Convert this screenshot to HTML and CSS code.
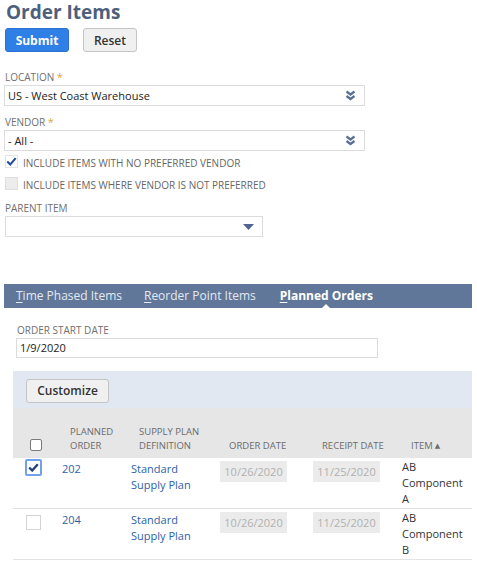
FILE: index.html
```html
<!DOCTYPE html>
<html>
<head>
<meta charset="utf-8">
<link rel="stylesheet" href="styles.css">
</head>
<body>
<div class="page">
  <h1 class="title">Order Items</h1>
  <div class="actions">
    <button class="btn btn-primary">Submit</button>
    <button class="btn btn-secondary">Reset</button>
  </div>

  <div class="field field-location">
    <div class="label">LOCATION <span class="req">*</span></div>
    <div class="select wide">
      <span>US - West Coast Warehouse</span>
      <svg class="dbl" width="11" height="11" viewBox="0 0 11 11"><path d="M1.5 1.5 L5.5 4.5 L9.5 1.5" fill="none" stroke="#5a6f96" stroke-width="2.2"/><path d="M1.5 6 L5.5 9 L9.5 6" fill="none" stroke="#5a6f96" stroke-width="2.2"/></svg>
    </div>
  </div>

  <div class="field field-vendor">
    <div class="label">VENDOR <span class="req">*</span></div>
    <div class="select wide">
      <span>- All -</span>
      <svg class="dbl" width="11" height="11" viewBox="0 0 11 11"><path d="M1.5 1.5 L5.5 4.5 L9.5 1.5" fill="none" stroke="#5a6f96" stroke-width="2.2"/><path d="M1.5 6 L5.5 9 L9.5 6" fill="none" stroke="#5a6f96" stroke-width="2.2"/></svg>
    </div>
  </div>

  <div class="checks">
    <div class="check-row">
      <span class="cb cb-plain">
        <svg width="13" height="11" viewBox="0 0 13 11"><path d="M1.5 5.5 L5 9 L11.5 1.5" fill="none" stroke="#1f4e9c" stroke-width="2.4"/></svg>
      </span>
      <span class="check-text">INCLUDE ITEMS WITH NO PREFERRED VENDOR</span>
    </div>
    <div class="check-row">
      <span class="cb cb-disabled"></span>
      <span class="check-text">INCLUDE ITEMS WHERE VENDOR IS NOT PREFERRED</span>
    </div>
  </div>

  <div class="field field-parent">
    <div class="label">PARENT ITEM</div>
    <div class="select narrow">
      <span></span>
      <svg class="tri" width="11" height="6" viewBox="0 0 11 6"><path d="M0 0 L11 0 L5.5 6 Z" fill="#4e6691"/></svg>
    </div>
  </div>

  <div class="tabs">
    <span class="tab"><u>T</u>ime Phased Items</span>
    <span class="tab"><u>R</u>eorder Point Items</span>
    <span class="tab tab-active"><u>P</u>lanned Orders</span>
  </div>

  <div class="sub">
    <div class="label">ORDER START DATE</div>
    <div class="input">1/9/2020</div>
  </div>

  <div class="grid-wrap">
    <div class="band">
      <button class="btn btn-secondary btn-customize">Customize</button>
    </div>
    <div class="table">
      <div class="row head">
        <div class="cell c1"><span class="cb cb-head"></span></div>
        <div class="cell c2">PLANNED<br>ORDER</div>
        <div class="cell c3">SUPPLY PLAN<br>DEFINITION</div>
        <div class="cell c4">ORDER DATE</div>
        <div class="cell c5">RECEIPT DATE</div>
        <div class="cell c6">ITEM <span class="sort">▲</span></div>
      </div>
      <div class="row body">
        <div class="cell c1"><span class="cb cb-focus"><svg width="11" height="9" viewBox="0 0 11 9"><path d="M1.2 4.5 L4.2 7.5 L9.8 1.2" fill="none" stroke="#1f3f7a" stroke-width="2.3"/></svg></span></div>
        <div class="cell c2"><a class="link">202</a></div>
        <div class="cell c3"><a class="link">Standard<br>Supply Plan</a></div>
        <div class="cell c4"><span class="date">10/26/2020</span></div>
        <div class="cell c5"><span class="date">11/25/2020</span></div>
        <div class="cell c6">AB<br>Component<br>A</div>
      </div>
      <div class="row body">
        <div class="cell c1"><span class="cb cb-empty"></span></div>
        <div class="cell c2"><a class="link">204</a></div>
        <div class="cell c3"><a class="link">Standard<br>Supply Plan</a></div>
        <div class="cell c4"><span class="date">10/26/2020</span></div>
        <div class="cell c5"><span class="date">11/25/2020</span></div>
        <div class="cell c6">AB<br>Component<br>B</div>
      </div>
    </div>
  </div>
</div>
</body>
</html>
```
FILE: styles.css
```css
* { box-sizing: border-box; }
body {
  margin: 0;
  background: #ffffff;
  font-family: "Open Sans", "DejaVu Sans", sans-serif;
  color: #333333;
}
.page {
  width: 477px;
  height: 566px;
  overflow: hidden;
  padding-left: 5px;
}
.title {
  margin: 0;
  padding: 2px 0 0 1px;
  font-size: 19px;
  line-height: 20px;
  font-weight: 700;
  color: #4d5f7c;
}
.actions {
  display: flex;
  gap: 14px;
  margin-top: 6px;
}
.btn {
  font-family: "Open Sans", "DejaVu Sans", sans-serif;
  font-size: 12px;
  font-weight: 700;
  height: 24px;
  border-radius: 3px;
  padding: 0;
  cursor: default;
}
.btn-primary {
  width: 64px;
  background: #2f80e6;
  border: 1px solid #2a72cf;
  color: #ffffff;
}
.btn-secondary {
  width: 54px;
  background: #f0f0f0;
  border: 1px solid #c4c4c4;
  color: #333333;
  font-weight: 600;
}
.label {
  font-size: 10px;
  line-height: 12px;
  color: #707070;
}
.req { color: #e8a23a; font-size: 11px; }
.field { display: flex; flex-direction: column; gap: 2px; }
.field-location { margin-top: 19px; }
.field-vendor { margin-top: 10px; }
.field-parent { margin-top: 3px; }
.select {
  height: 21px;
  border: 1px solid #dcdcdc;
  display: flex;
  align-items: center;
  justify-content: space-between;
  padding: 0 8px 0 3px;
  font-size: 11px;
  color: #222222;
}
.select.wide { width: 361px; margin-left: -1px; }
.select.narrow { width: 258px; }
.checks { margin-top: 4px; display: flex; flex-direction: column; }
.check-row {
  height: 22px;
  display: flex;
  align-items: flex-start;
  gap: 5px;
}
.cb {
  width: 13px;
  height: 13px;
  display: inline-flex;
  align-items: center;
  justify-content: center;
  flex: none;
}
.cb-plain { border: 1px solid #e4e4e4; background: #ffffff; }
.cb-disabled { border: 1px solid #dedede; background: #ececec; }
.check-text {
  font-size: 10px;
  line-height: 14px;
  color: #666666;
  padding-top: 1px;
}
.tabs {
  margin-top: 47px;
  width: 468px;
  margin-left: -1px;
  height: 24px;
  background: #607799;
  display: flex;
  align-items: center;
  gap: 22px;
  padding-left: 12px;
  font-size: 12px;
  color: #e4e9f1;
}
.tab { position: relative; line-height: 24px; }
.tab u { text-decoration: underline; text-underline-offset: 2px; }
.tab-active { font-weight: 700; color: #ffffff; margin-left: 2px; }
.tab-active::after {
  content: "";
  position: absolute;
  left: 50%;
  bottom: 0;
  margin-left: -4px;
  border-left: 4px solid transparent;
  border-right: 4px solid transparent;
  border-bottom: 4px solid #ffffff;
}
.sub { padding-left: 12px; margin-top: 16px; display: flex; flex-direction: column; gap: 2px; }
.input {
  width: 362px;
  height: 20px;
  border: 1px solid #dcdcdc;
  font-size: 11px;
  line-height: 18px;
  padding-left: 3px;
  color: #222222;
  margin-left: -1px;
}
.grid-wrap { margin-top: 13px; margin-left: 8px; width: 459px; overflow: hidden; }
.band {
  height: 37px;
  background: #e1e8f1;
  padding: 7px 0 0 13px;
}
.btn-customize { width: 83px; font-size: 12px; font-weight: 600; }
.table { display: flex; flex-direction: column; }
.row {
  display: grid;
  grid-template-columns: 42px 69px 89px 93px 89px 77px;
}
.head {
  height: 50px;
  background: #e6e6e6;
  font-size: 9.5px;
  line-height: 14px;
  color: #6b6b6b;
}
.head .cell { display: flex; align-items: flex-end; padding-bottom: 5px; }
.head .c1 { padding-left: 17px; padding-bottom: 7px; }
.head .c2, .head .c3 { padding-left: 15px; }
.head .c4, .head .c5, .head .c6 { padding-left: 16px; }
.sort { font-size: 7px; margin-left: 2px; }
.cb-head { width: 12px; height: 12px; border: 1px solid #7a7a7a; border-radius: 2px; background: #ffffff; }
.body {
  height: 51px;
  border-bottom: 1px solid #e2e2e2;
  font-size: 11px;
  line-height: 16px;
  color: #333333;
}
.body .cell { padding-left: 7px; padding-top: 3px; }
.body .c1 { padding-left: 12px; padding-top: 1px; }
.body .c2, .body .c3 { padding-top: 3px; }
.body .c6 { padding-top: 1px; }
.cb-focus { width: 17px; height: 17px; border: 2px solid #6ea3e8; background: #ffffff; border-radius: 2px; }
.cb-empty { width: 15px; height: 15px; border: 1px solid #d4d4d4; background: #ffffff; margin-top: 5px; margin-left: 1px; }
.link { color: #2d5fa8; text-decoration: none; }
.date {
  display: inline-block;
  width: 67px;
  height: 21px;
  background: #ebebeb;
  color: #b0b0b0;
  font-size: 11px;
  line-height: 21px;
  text-align: center;
}
```
